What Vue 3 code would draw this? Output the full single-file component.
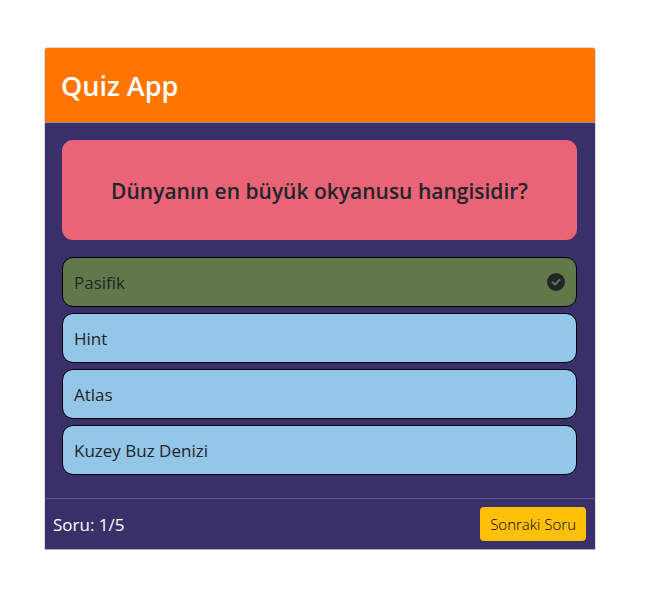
<script setup>
import { ref, computed } from 'vue'

const questions = [
  {
    text: 'Dünyanın en büyük okyanusu hangisidir?',
    options: ['Pasifik', 'Hint', 'Atlas', 'Kuzey Buz Denizi'],
    answer: 0,
  },
]
const total = 5
const index = ref(0)
const selected = ref(0)
const question = computed(() => questions[index.value])

function next() {
  if (index.value < questions.length - 1) {
    index.value++
    selected.value = null
  }
}
</script>

<template>
  <main class="page">
    <section class="card">
      <header class="card-header">
        <h1 class="title">Quiz App</h1>
      </header>
      <div class="card-body">
        <h2 class="question">{{ question.text }}</h2>
        <div class="options">
          <button
            v-for="(option, i) in question.options"
            :key="option"
            type="button"
            class="option"
            :class="{ correct: selected !== null && i === question.answer }"
            @click="selected = i"
          >
            <span>{{ option }}</span>
            <svg
              v-if="selected !== null && i === question.answer"
              class="icon"
              viewBox="0 0 512 512"
              aria-hidden="true"
            >
              <circle cx="256" cy="256" r="256" fill="#212529" />
              <path
                d="M160 262l66 66L358 196"
                fill="none"
                stroke="#61784a"
                stroke-width="56"
                stroke-linecap="round"
                stroke-linejoin="round"
              />
            </svg>
          </button>
        </div>
      </div>
      <footer class="card-footer">
        <span>Soru: {{ index + 1 }}/{{ total }}</span>
        <button type="button" class="next" @click="next">Sonraki Soru</button>
      </footer>
    </section>
  </main>
</template>

<style>
body {
  background: #fff;
}
</style>

<style scoped>
* {
  box-sizing: border-box;
}
.page {
  padding: 47px 61px 47px 44px;
  font-family: 'Segoe UI', 'Open Sans', 'Noto Sans', sans-serif;
  color: #212529;
}
.card {
  border: 1px solid #d9dade;
  border-bottom-color: #aaa6c0;
  border-radius: 4px 4px 1px 1px;
  background: #393069;
  background-clip: padding-box;
  overflow: hidden;
}
.card-header {
  padding: 17px 16px 15px;
  background: #ff7500;
  border-bottom: 1px solid #a08a95;
}
.title {
  margin: 0;
  font-size: 27px;
  font-weight: 600;
  line-height: 42px;
  color: #fff;
}
.card-body {
  padding: 17px 18px 23px 17px;
}
.question {
  margin: 0 0 17px;
  padding: 34px 16px 32px;
  border-radius: 11px;
  background: #ea6478;
  font-size: 21px;
  font-weight: 600;
  line-height: 34px;
  text-align: center;
}
.options {
  display: flex;
  flex-direction: column;
  gap: 6px;
}
.option {
  display: flex;
  align-items: center;
  justify-content: space-between;
  width: 100%;
  height: 50px;
  padding: 0 11px;
  border: 1px solid #000;
  border-radius: 11px;
  background: #94c6e7;
  color: inherit;
  font-family: inherit;
  font-size: 17px;
  font-weight: 400;
  text-align: left;
  cursor: pointer;
}
.option.correct {
  background: #61784a;
}
.icon {
  width: 18px;
  height: 18px;
}
.card-footer {
  display: flex;
  align-items: center;
  justify-content: space-between;
  padding: 8px 9px 8px 8px;
  border-top: 1px solid #625a88;
  font-size: 17px;
  color: #fff;
}
.next {
  height: 34px;
  padding: 0 10px;
  border: 0;
  border-radius: 4px;
  background: #ffc107;
  color: #000;
  font-family: inherit;
  font-size: 15px;
  font-weight: 300;
  cursor: pointer;
}
</style>
